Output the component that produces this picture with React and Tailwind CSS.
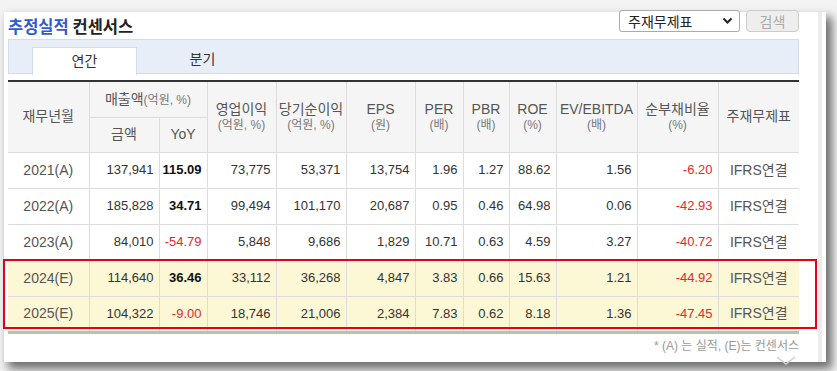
import React from "react";

const rows = [
  { ym: "2021(A)", sales: "137,941", yoy: "115.09", op: "73,775", net: "53,371", eps: "13,754", per: "1.96", pbr: "1.27", roe: "88.62", ev: "1.56", debt: "-6.20" },
  { ym: "2022(A)", sales: "185,828", yoy: "34.71", op: "99,494", net: "101,170", eps: "20,687", per: "0.95", pbr: "0.46", roe: "64.98", ev: "0.06", debt: "-42.93" },
  { ym: "2023(A)", sales: "84,010", yoy: "-54.79", op: "5,848", net: "9,686", eps: "1,829", per: "10.71", pbr: "0.63", roe: "4.59", ev: "3.27", debt: "-40.72" },
  { ym: "2024(E)", sales: "114,640", yoy: "36.46", op: "33,112", net: "36,268", eps: "4,847", per: "3.83", pbr: "0.66", roe: "15.63", ev: "1.21", debt: "-44.92", est: true },
  { ym: "2025(E)", sales: "104,322", yoy: "-9.00", op: "18,746", net: "21,006", eps: "2,384", per: "7.83", pbr: "0.62", roe: "8.18", ev: "1.36", debt: "-47.45", est: true },
];

const widths = [81, 70, 48, 69, 70, 69, 48, 46, 47, 81, 81, 81];

function HeadCell({ label, unit, className = "" }) {
  return (
    <th rowSpan={2} className={`border border-[#dcdcdc] font-normal align-middle leading-[16px] ${className}`}>
      <div className="text-[14px] text-[#555]">{label}</div>
      {unit && <div className="text-[12px] text-[#777]">{unit}</div>}
    </th>
  );
}

function Num({ v, className = "" }) {
  return <td className={`border border-[#dcdcdc] text-right pr-[5px] ${className}`}>{v}</td>;
}

export default function App() {
  return (
    <div className="w-[837px] h-[371px] overflow-hidden bg-[#f3f3f3] pt-[12px] pl-[4px]" style={{ fontFamily: '"Liberation Sans", "Noto Sans CJK KR", sans-serif' }}>
      <div className="relative w-[822px] h-[350px] bg-white shadow-[5px_6px_9px_1px_rgba(0,0,0,0.55)] pl-[4px] pr-[27px]">
        {/* scroll strip */}
        <div className="absolute top-0 bottom-0 right-[4px] w-[4px] bg-[#ececec]" />

        {/* title row */}
        <div className="flex items-center justify-between h-[27px]">
          <h2 className="text-[16.5px] font-bold leading-none pt-[1px]" style={{ fontFamily: '"Noto Sans CJK KR", sans-serif' }}>
            <span className="text-[#2f5bd0]">추정실적</span> <span className="text-[#222]">컨센서스</span>
          </h2>
          <div className="flex items-center gap-[6px] self-start -mt-[2px]">
            <div className="w-[121px] h-[22px] border border-[#aaa] rounded-[3px] flex items-center justify-between pl-[8px] pr-[6px] text-[14px] text-[#222] bg-white">
              <span style={{ fontFamily: '"Noto Sans CJK KR", sans-serif' }}>주재무제표</span>
              <svg width="11" height="8" viewBox="0 0 11 8"><path d="M1.5 1.5 L5.5 5.5 L9.5 1.5" fill="none" stroke="#222" strokeWidth="2" /></svg>
            </div>
            <button className="w-[53px] h-[22px] border border-[#ccc] rounded-[4px] bg-[#eeeeee] text-[14px] text-[#aaa]" style={{ fontFamily: '"Noto Sans CJK KR", sans-serif' }}>
              검색
            </button>
          </div>
        </div>

        {/* tabs */}
        <div className="h-[35px] bg-[#e8eef8] border border-[#d3dcec] flex items-end pl-[23px] gap-[13px]">
          <div className="w-[105px] h-[28px] -mb-[2px] bg-white border border-b-0 border-[#d3dcec] flex items-center justify-center text-[14px] text-[#333]">연간</div>
          <div className="w-[105px] h-[28px] flex items-center justify-center text-[14px] text-[#333]">분기</div>
        </div>

        {/* table */}
        <table className="mt-[6px] w-[791px] table-fixed border-collapse border-t-2 border-t-[#333] border-b-[3px] border-b-[#bdbdbd] text-[13px] text-[#333]">
          <colgroup>
            {widths.map((w, i) => (
              <col key={i} style={{ width: w }} />
            ))}
          </colgroup>
          <thead className="bg-[#f5f5f5]">
            <tr className="h-[36px]">
              <th rowSpan={2} className="border border-[#dcdcdc] border-l-0 font-normal text-[14px] text-[#555]">재무년월</th>
              <th colSpan={2} className="border border-[#dcdcdc] font-normal text-[14px] text-[#555]">
                매출액<span className="text-[12px] text-[#777]">(억원, %)</span>
              </th>
              <HeadCell label="영업이익" unit="(억원, %)" />
              <HeadCell label="당기순이익" unit="(억원, %)" />
              <HeadCell label="EPS" unit="(원)" />
              <HeadCell label="PER" unit="(배)" />
              <HeadCell label="PBR" unit="(배)" />
              <HeadCell label="ROE" unit="(%)" />
              <HeadCell label="EV/EBITDA" unit="(배)" />
              <HeadCell label="순부채비율" unit="(%)" />
              <th rowSpan={2} className="border border-[#dcdcdc] border-r-0 font-normal text-[14px] text-[#555]">주재무제표</th>
            </tr>
            <tr className="h-[35px]">
              <th className="border border-[#dcdcdc] font-normal text-[14px] text-[#555]">금액</th>
              <th className="border border-[#dcdcdc] font-normal text-[14px] text-[#555]">YoY</th>
            </tr>
          </thead>
          <tbody>
            {rows.map((r) => {
              const neg = r.yoy.startsWith("-");
              return (
                <tr key={r.ym} className={`h-[36px] ${r.est ? "bg-[#fcf7d5]" : "bg-white"}`}>
                  <td className="border border-[#dcdcdc] border-l-0 text-center text-[#555] text-[14px]">{r.ym}</td>
                  <Num v={r.sales} />
                  <Num v={r.yoy} className={neg ? "text-[#e8262b]" : "text-[#111] font-bold"} />
                  <Num v={r.op} />
                  <Num v={r.net} />
                  <Num v={r.eps} />
                  <Num v={r.per} />
                  <Num v={r.pbr} />
                  <Num v={r.roe} />
                  <Num v={r.ev} />
                  <Num v={r.debt} className="text-[#e8262b]" />
                  <td className="border border-[#dcdcdc] border-r-0 text-center text-[#555] text-[14px]">IFRS연결</td>
                </tr>
              );
            })}
          </tbody>
        </table>

        {/* red highlight box */}
        <div className="absolute left-[-1px] top-[247px] w-[814px] h-[70px] border-2 border-[#e60012] pointer-events-none" />

        {/* footnote */}
        <div className="w-[791px] text-right text-[12px] text-[#999] mt-[3px]">* (A) 는 실적, (E)는 컨센서스</div>

        {/* collapse chevron */}
        <svg className="absolute right-[29px] bottom-[-4px]" width="22" height="10" viewBox="0 0 22 10">
          <path d="M2 1 L11 8 L20 1" fill="none" stroke="#cfcfcf" strokeWidth="1.5" />
        </svg>
      </div>
    </div>
  );
}
